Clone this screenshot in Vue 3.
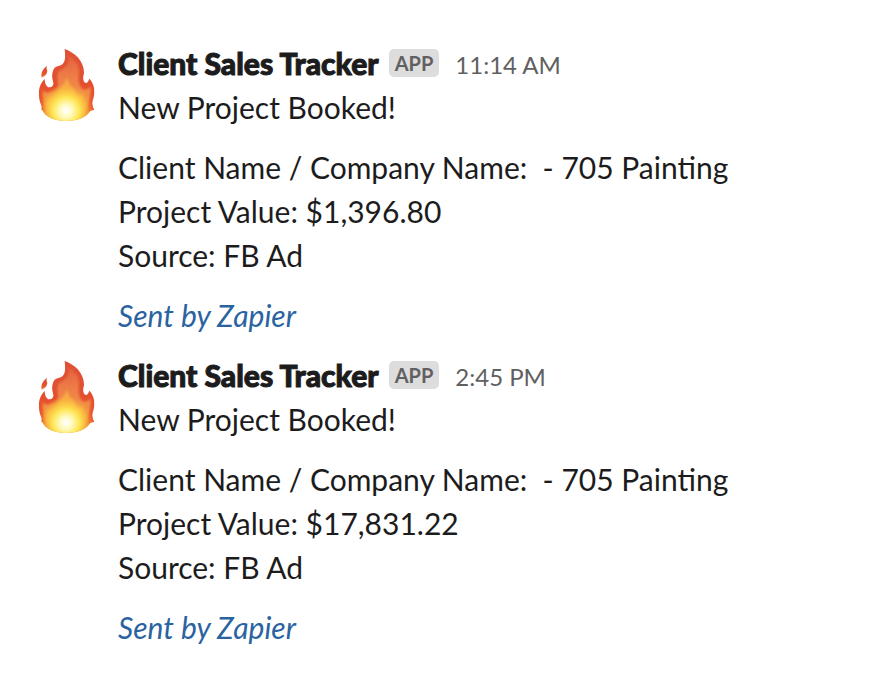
<script setup>
const messages = [
  { id: 1, time: '11:14 AM', value: '$1,396.80' },
  { id: 2, time: '2:45 PM', value: '$17,831.22' },
]
</script>

<template>
  <main class="feed">
    <article v-for="m in messages" :key="m.id" class="message">
      <svg class="avatar" viewBox="18 21 180 228" role="img" aria-label="Fire">
        <defs>
          <linearGradient :id="`outer-${m.id}`" x1="0" y1="0" x2="0" y2="1">
            <stop offset="0" stop-color="#de5238" />
            <stop offset="0.5" stop-color="#e44e2e" />
            <stop offset="0.8" stop-color="#ea5c30" />
            <stop offset="1" stop-color="#f09a3c" />
          </linearGradient>
          <linearGradient :id="`body-${m.id}`" x1="0" y1="0" x2="0" y2="1">
            <stop offset="0" stop-color="#e5603f" />
            <stop offset="0.35" stop-color="#ee8048" />
            <stop offset="1" stop-color="#f8a83e" />
          </linearGradient>
          <radialGradient :id="`glow-${m.id}`" gradientUnits="userSpaceOnUse" cx="108" cy="212" r="80">
            <stop offset="0" stop-color="#ffffff" />
            <stop offset="0.22" stop-color="#fffbc4" />
            <stop offset="0.5" stop-color="#fee656" />
            <stop offset="0.75" stop-color="#fcc83e" stop-opacity="0.65" />
            <stop offset="1" stop-color="#f79b3e" stop-opacity="0" />
          </radialGradient>
          <filter :id="`soft-${m.id}`" x="-20%" y="-20%" width="140%" height="140%">
            <feGaussianBlur stdDeviation="3" />
          </filter>
          <clipPath :id="`shape-${m.id}`">
            <path d="M104 27C136 38 161 64 162 96C162 106 157 112 161 122C164 130 170 130 173 126C176 122 176 119 178 116C188 126 194 141 193 158C193 171 187 181 187 189C188 198 189 204 193 209C188 211 183 211 180 214C168 233 143 243 109 243C75 243 51 232 40 216C38 212 36 210 33 208C35 205 36 203 34 197C29 185 25 169 27 152C28 138 34 127 44 116C44 131 50 141 58 142C65 142 71 136 70 128C67 117 64 104 70 90C75 79 85 79 92 76C108 69 106 49 104 27Z" />
          </clipPath>
        </defs>
        <path :fill="`url(#outer-${m.id})`" d="M51 77C39 86 32 98 35 113C47 107 54 98 51 89C49 85 50 81 51 77Z" />
        <g :clip-path="`url(#shape-${m.id})`">
          <rect x="18" y="21" width="180" height="228" :fill="`url(#outer-${m.id})`" />
          <path :fill="`url(#body-${m.id})`" :filter="`url(#soft-${m.id})`" d="M115 47C138 59 148 77 147 96C145 113 144 132 156 146C168 152 176 146 180 139C186 159 175 185 172 202C162 228 138 237 108 238C75 237 50 222 45 202C41 188 36 165 39 150C47 163 68 158 82 144C88 133 79 111 84 98C90 88 103 88 110 76C117 68 116 56 115 47Z" />
          <path fill="#f9b545" fill-opacity="0.8" :filter="`url(#soft-${m.id})`" d="M111 110C112 135 133 139 137 162C140 174 152 170 158 162C165 184 155 224 108 238C59 226 49 194 54 169C63 181 77 171 82 158C87 143 105 137 111 110Z" />
          <rect x="18" y="121" width="180" height="128" :fill="`url(#glow-${m.id})`" />
        </g>
      </svg>
      <div class="content">
        <header class="heading">
          <strong class="name">Client Sales Tracker</strong>
          <span class="badge">APP</span>
          <time class="time">{{ m.time }}</time>
        </header>
        <p class="text">New Project Booked!</p>
        <p class="text details">
          Client Name / Company Name:&nbsp; - 705 Painting<br />
          Project Value: {{ m.value }}<br />
          Source: FB Ad
        </p>
        <a class="sent" href="#">Sent by Zapier</a>
      </div>
    </article>
  </main>
</template>

<style>
body {
  margin: 0;
  background: #fff;
}
</style>

<style scoped>
.feed {
  padding: 41px 36px 0;
  font-family: Lato, "Liberation Sans", sans-serif;
  font-size: 30px;
  line-height: 44px;
  color: #1d1c1d;
}
.message {
  display: flex;
  gap: 22px;
  padding-bottom: 16px;
}
.avatar {
  flex: none;
  width: 60px;
  height: 76px;
  margin-top: 6px;
}
.content {
  flex: 1;
  min-width: 0;
}
.heading {
  display: flex;
  align-items: center;
}
.name {
  font-weight: 900;
  -webkit-text-stroke: 1px currentColor;
}
.badge {
  margin: 0 16px 0 10px;
  padding: 0 6px;
  border-radius: 5px;
  background: #dddddd;
  color: #616061;
  font-size: 20px;
  font-weight: 700;
  line-height: 28px;
}
.time {
  padding-top: 4px;
  color: #616061;
  font-size: 24px;
  line-height: 40px;
}
.text {
  margin: 0;
}
.details {
  margin: 16px 0;
}
.sent {
  display: block;
  color: #2a639f;
  font-style: italic;
  text-decoration: none;
}
</style>
